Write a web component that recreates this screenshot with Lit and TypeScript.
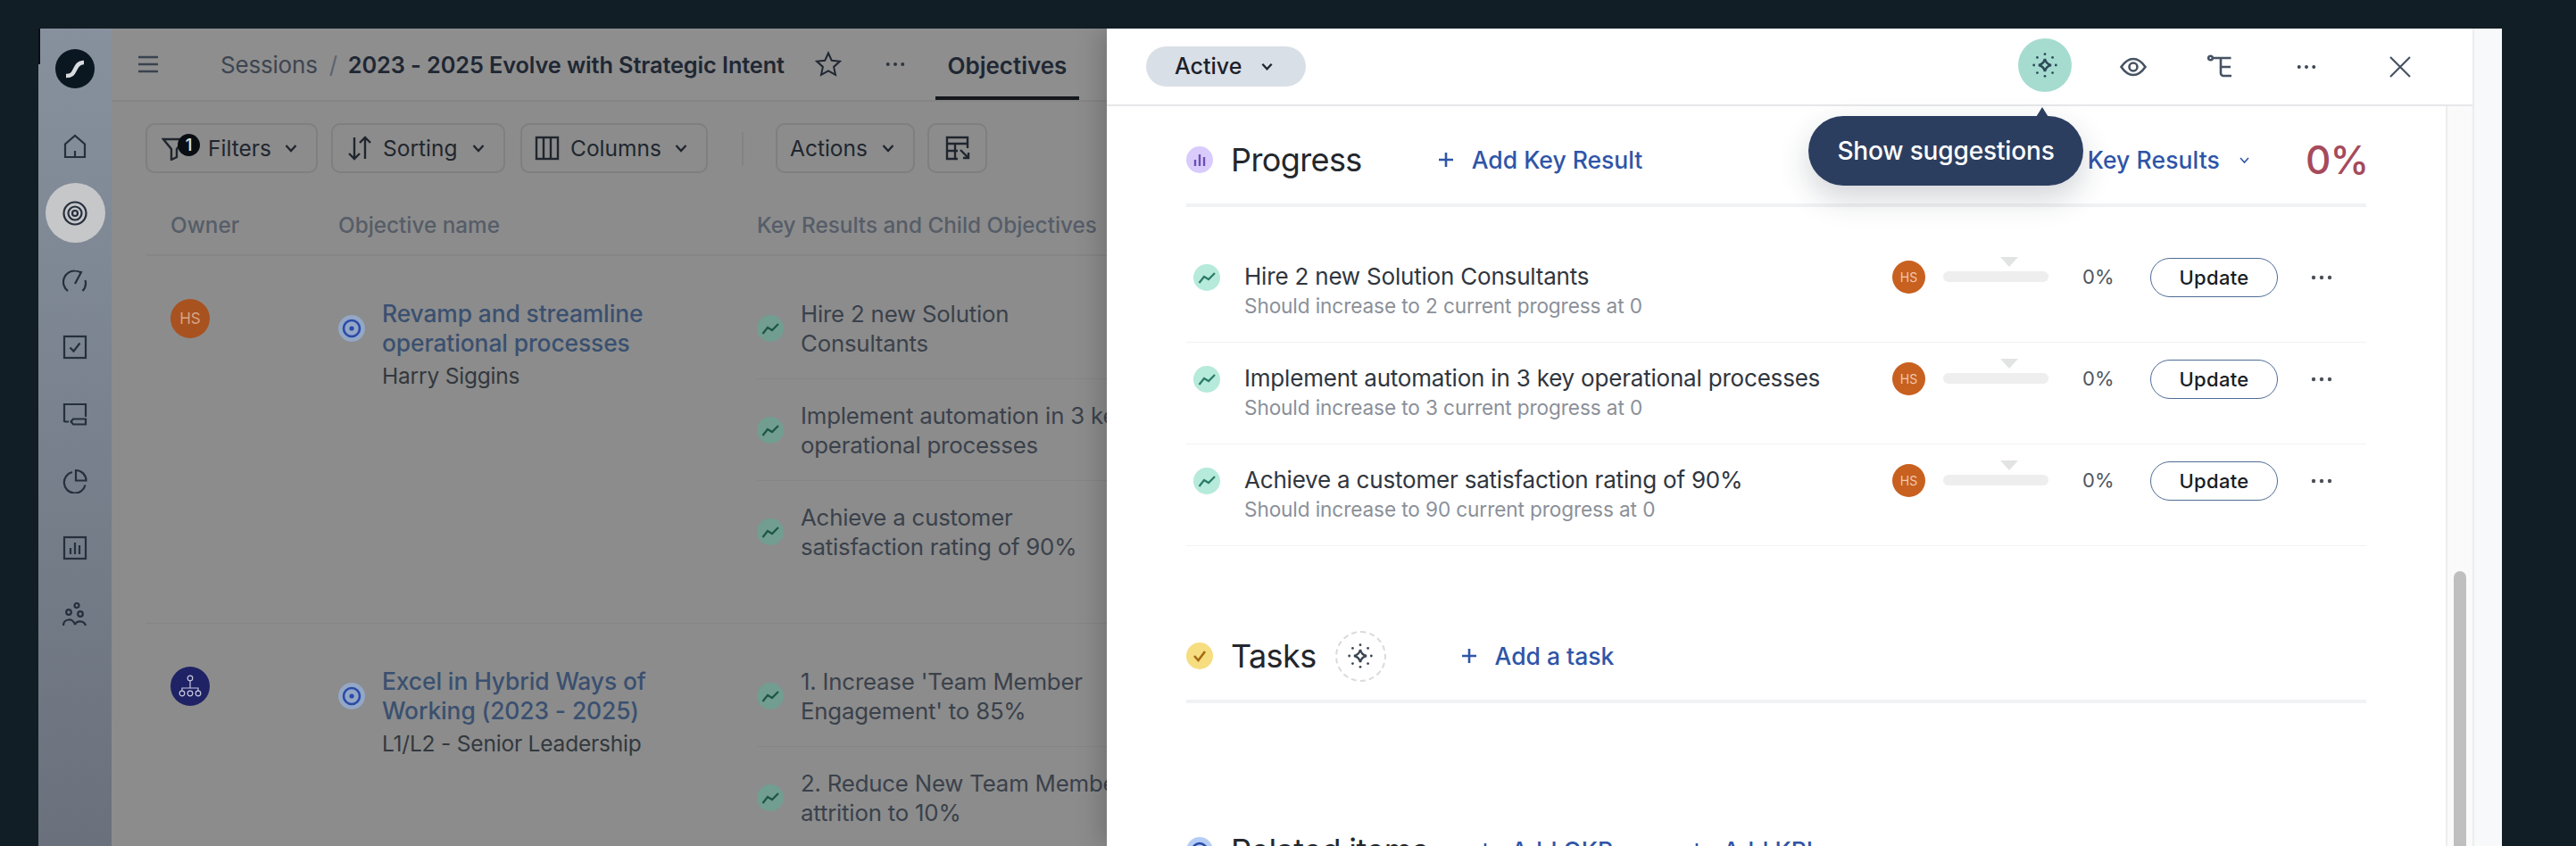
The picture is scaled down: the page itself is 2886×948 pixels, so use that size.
import { LitElement, html, svg, css } from "lit";
import { customElement } from "lit/decorators.js";

const rail = (d: any) => html`<svg class="rail-ic" viewBox="0 0 28 28">${d}</svg>`;
const chev = (cls = "chev") => html`<svg class=${cls} viewBox="0 0 16 16"><path d="M2.500 5 L8 11 L13.500 5"/></svg>`;
const dots = (cls = "dots") => html`<svg class=${cls} viewBox="0 0 24 6"><circle cx="3" cy="3" r="2.200"/><circle cx="12" cy="3" r="2.200"/><circle cx="21" cy="3" r="2.200"/></svg>`;
const spark = (cls: string) => html`<svg class=${cls} viewBox="0 0 28 28">
  <path class="fill" d="M14 7.500 Q15.200 12.800 20.500 14 Q15.200 15.200 14 20.500 Q12.800 15.200 7.500 14 Q12.800 12.800 14 7.500Z"/>
  <g class="ray"><circle cx="14" cy="2.500" r="1.300"/><circle cx="14" cy="25.500" r="1.300"/><circle cx="2.500" cy="14" r="1.300"/><circle cx="25.500" cy="14" r="1.300"/><circle cx="6" cy="6" r="1.300"/><circle cx="22" cy="6" r="1.300"/><circle cx="6" cy="22" r="1.300"/><circle cx="22" cy="22" r="1.300"/></g></svg>`;
const trend = (dim: boolean) => html`<span class="dotic ${dim ? "trend-dim" : "trend"}"><svg viewBox="0 0 30 30"><path d="M6.500 21 L12 14 L17 17 L24 10"/></svg></span>`;
const objIc = () => html`<span class="objic"><svg viewBox="0 0 30 30"><circle cx="15" cy="15" r="9"/><circle class="c" cx="15" cy="15" r="2.600"/></svg></span>`;
const plus = () => html`<svg class="plus" viewBox="0 0 18 18"><path d="M9 1v16M1 9h16"/></svg>`;

const OBJECTIVES = [
  { org: false, title: ["Revamp and streamline", "operational processes"], sub: "Harry Siggins",
    krs: [["Hire 2 new Solution", "Consultants"], ["Implement automation in 3 key", "operational processes"], ["Achieve a customer", "satisfaction rating of 90%"]] },
  { org: true, title: ["Excel in Hybrid Ways of", "Working (2023 - 2025)"], sub: "L1/L2 - Senior Leadership",
    krs: [["1. Increase 'Team Member", "Engagement' to 85%"], ["2. Reduce New Team Member", "attrition to 10%"]] },
];
const PROGRESS = [
  ["Hire 2 new Solution Consultants", "Should increase to 2 current progress at 0"],
  ["Implement automation in 3 key operational processes", "Should increase to 3 current progress at 0"],
  ["Achieve a customer satisfaction rating of 90%", "Should increase to 90 current progress at 0"],
];

@customElement("app-root")
export class AppRoot extends LitElement {
  static styles = css`
    :host { display: block; font-family: Inter, "Liberation Sans", sans-serif; }
    * { box-sizing: border-box; }
    svg { display: block; flex: none; }
    .shell { width: 2886px; height: 948px; background: #121e25; padding: 32px 0 0 43px; overflow: hidden; position: relative; }
    .nub { position: absolute; left: 43px; top: 32px; width: 2px; height: 40px; background: #0a0f13; z-index: 5; }
    .app { width: 2760px; height: 916px; display: flex; position: relative; overflow: hidden; }
    .rail { width: 82px; flex: none; display: flex; flex-direction: column; align-items: center; padding-top: 23px; background: linear-gradient(#87919e, #6a717c); }
    .logo { width: 44px; height: 44px; margin-bottom: 31px; }
    .rail-item { width: 67px; height: 67px; margin-bottom: 8px; display: flex; align-items: center; justify-content: center; border-radius: 50%; }
    .rail-item.on { background: #c6c7c9; }
    .rail-ic { width: 28px; height: 28px; fill: none; stroke: #262f3d; stroke-width: 2.200; }
    .main { flex: 1; background: #8c8c8c; min-width: 0; }
    .top { height: 82px; display: flex; align-items: center; border-bottom: 2px solid #858585; background: #8e8e8e; padding-left: 29px; position: relative; }
    .burger { width: 24px; height: 20px; fill: none; stroke: #3a4350; stroke-width: 2.600; }
    .crumb { margin-left: 69px; font-size: 26px; color: #3d4550; white-space: nowrap; letter-spacing: -0.200px; }
    .sep { margin: 0 12px 0 13px; color: #5c636d; font-size: 26px; }
    .ttl { font-size: 25.300px; font-weight: 600; color: #1f2733; white-space: nowrap; letter-spacing: -0.100px; }
    .star { width: 30px; height: 30px; margin-left: 34px; fill: none; stroke: #1f2733; stroke-width: 2; }
    .top .dots { width: 22px; height: 6px; fill: #2f3640; margin-left: 49px; }
    .tab { margin-left: 34px; height: 80px; padding: 6px 0 0; display: flex; align-items: center; font-size: 26px; font-weight: 600; color: #1f2733; border-bottom: 4px solid #14181d; white-space: nowrap; width: 161px; justify-content: center; }
    .tools { display: flex; padding: 24px 0 0 38px; height: 79px; }
    .btn { height: 56px; border: 2px solid #7f7f7f; border-radius: 10px; display: flex; align-items: center; font-size: 24.500px; color: #20262e; position: relative; white-space: nowrap; }
    .b-filter { width: 193px; padding-left: 16px; }
    .b-sort { width: 195px; padding-left: 16px; margin-left: 15px; }
    .b-cols { width: 210px; padding-left: 14px; margin-left: 17px; }
    .b-act { width: 156px; padding-left: 14px; }
    .b-grid { width: 67px; justify-content: center; margin-left: 14px; }
    .vr { width: 2px; height: 38px; background: #838383; margin: 10px 36px 0 38px; }
    .tic { width: 28px; height: 28px; fill: none; stroke: #20262e; stroke-width: 2.400; margin-right: 12px; }
    .b-grid .tic { margin: 0; }
    .btn .chev { margin-left: auto; margin-right: 20px; }
    .chev { width: 16px; height: 16px; fill: none; stroke: #20262e; stroke-width: 2.400; }
    .badge { position: absolute; left: 34px; top: 10px; width: 25px; height: 25px; border-radius: 50%; background: #0a0e12; color: #d8d8d8; font-size: 18px; font-weight: 600; display: flex; align-items: center; justify-content: center; }
    .b-filter .tic { margin-right: 24px; }
    .grid { display: grid; grid-template-columns: 188px 469px 1fr; padding-left: 27px; }
    .thead { margin-left: 39px; height: 94px; padding-top: 26px; align-items: center; border-bottom: 2px solid #858585; font-size: 24.300px; font-weight: 500; color: #565d68; white-space: nowrap; }
    .tr { margin-left: 39px; padding-top: 24px; padding-bottom: 45px; border-bottom: 1px solid #858585; }
    .ava { width: 44px; height: 44px; margin-top: 24px; border-radius: 50%; display: flex; align-items: center; justify-content: center; background: #a85220; color: #d7a584; font-size: 17px; }
    .ava.org { background: #1f2264; }
    .ava svg { width: 30px; height: 30px; fill: none; stroke: #c6c8de; stroke-width: 1.200; }
    .ocell { display: flex; gap: 19px; margin-top: 24px; }
    .objic { width: 30px; height: 30px; flex: none; margin-top: 18px; border-radius: 50%; background: #93a7c6; }
    .objic svg { fill: none; stroke: #2b49a8; stroke-width: 2.600; width: 30px; height: 30px; }
    .objic .c { fill: #2b49a8; stroke: none; }
    .otitle { font-size: 26.400px; line-height: 33px; font-weight: 500; color: #3a5070; white-space: nowrap; letter-spacing: -0.100px; }
    .osub { font-size: 24.500px; line-height: 33px; margin-top: 4px; color: #33383e; white-space: nowrap; letter-spacing: -0.200px; }
    .kr { height: 114px; display: flex; align-items: center; gap: 19px; border-bottom: 1px solid #858585; }
    .kr.last { border-bottom: 0; }
    .krt { font-size: 25.800px; line-height: 33px; color: #3a414b; white-space: nowrap; letter-spacing: -0.200px; }
    .dotic { width: 30px; height: 30px; flex: none; border-radius: 50%; display: block; }
    .dotic svg { width: 30px; height: 30px; fill: none; stroke-width: 2.200; }
    .trend { background: #b6eadb; } .trend svg { stroke: #2a7c67; }
    .trend-dim { background: #719e90; } .trend-dim svg { stroke: #1e5548; }
    .panel { position: absolute; left: 1197px; top: 0; width: 1563px; height: 916px; display: flex; background: #fff; box-shadow: -8px 0 26px rgba(0,0,0,.18); }
    .pcol { width: 1532px; display: flex; flex-direction: column; border-right: 2px solid #eceded; }
    .strip { flex: 1; background: #f8f9fa; }
    .phead { height: 87px; flex: none; display: flex; align-items: center; border-bottom: 2px solid #e6e7e9; padding-left: 44px; position: relative; }
    .pill { width: 179px; height: 45px; margin-top: -1px; border-radius: 23px; background: #d9dfe6; display: flex; align-items: center; padding-left: 32px; font-size: 25px; font-weight: 500; color: #1b212a; }
    .pill .chev { margin-left: 21px; width: 15px; height: 15px; }
    .sug { margin-left: auto; width: 60px; height: 60px; border-radius: 50%; background: #a6dccf; display: flex; align-items: center; justify-content: center; margin-top: -4px; }
    .sug-ic { width: 30px; height: 30px; }
    .sug-ic .fill { fill: #a6dccf; stroke: #2e4b58; stroke-width: 2.400; }
    .ds-ic .fill { fill: #fff; stroke: #3a4652; stroke-width: 2.200; }
    .sug-ic .ray { fill: #2e4b58; }
    .ds-ic .ray { fill: #3a4652; }
    .pic { width: 30px; height: 30px; fill: none; stroke: #465263; stroke-width: 2.600; }
    .pic.eye { margin-left: 54px; }
    .pic.tree { margin-left: 68px; }
    .phead .dots { width: 22px; height: 6px; fill: #3b4757; margin-left: 70px; }
    .pic.x { margin-left: 81px; margin-right: 68px; width: 26px; height: 26px; stroke-width: 2.200; }
    .tip { position: absolute; left: 786px; top: 98px; width: 308px; height: 78px; border-radius: 39px; background: #2c3e60; color: #fff; display: flex; align-items: center; justify-content: center; font-size: 28px; font-weight: 500; letter-spacing: -0.150px; box-shadow: 0 14px 34px rgba(30,40,60,.2); z-index: 3; }
    .tip::before { content: ""; position: absolute; left: 252px; top: -10px; width: 0; height: 0; border-left: 10px solid transparent; border-right: 10px solid transparent; border-bottom: 16px solid #2c3e60; }
    .pbody { flex: 1; display: flex; min-height: 0; }
    .content { width: 1500px; padding: 11px 89px 0; overflow: hidden; }
    .track { flex: 1; background: #fafafa; border-left: 2px solid #eceded; padding: 521px 7px 0 7px; display: flex; }
    .thumb { flex: 1; background: #bfbfbf; border-radius: 8px 8px 0 0; }
    .sh { height: 102px; border-bottom: 4px solid #f1f2f3; display: flex; align-items: center; }
    .sh.tasks { margin-top: 74px; }
    .sh.rel { margin-top: 114px; border: 0; }
    .sic { width: 30px; height: 30px; border-radius: 50%; flex: none; margin-right: 20px; }
    .sic svg { width: 30px; height: 30px; fill: none; }
    .sic.p { background: #d9cbfb; } .sic.p svg { stroke: #6c50b8; stroke-width: 2.400; }
    .sic.t { background: #f6dd80; } .sic.t svg { stroke: #a56a12; stroke-width: 2.600; }
    .sic.r { background: #b4cdf6; } .sic.r svg { stroke: #2b49a8; stroke-width: 2.600; }
    .stitle { font-size: 36px; color: #23272d; white-space: nowrap; letter-spacing: -0.600px; }
    .add { display: flex; align-items: center; color: #2f55a8; font-size: 26.500px; font-weight: 500; white-space: nowrap; }
    .plus { width: 18px; height: 18px; fill: none; stroke: #2f55a8; stroke-width: 2.600; margin-right: 20px; }
    .m-p { margin-left: 85px; } .m-t { margin-left: 84px; } .m-r { margin-left: 55px; } .m-k { margin-left: 85px; }
    .ds { width: 57px; height: 57px; margin-left: 21px; border-radius: 50%; border: 2px dashed #dadada; display: flex; align-items: center; justify-content: center; }
    .ds-ic { width: 30px; height: 30px; }
    .kfilter { margin-left: auto; display: flex; align-items: center; color: #2f55a8; font-size: 26.500px; font-weight: 500; letter-spacing: .1px; }
    .kfilter .chev { stroke: #2f55a8; width: 13px; height: 13px; margin: 0 62px 0 21px; stroke-width: 2; }
    .zero { font-size: 44px; font-weight: 500; color: #a64a5c; width: 68px; white-space: nowrap; letter-spacing: -1px; }
    .rows { margin-top: 38px; }
    .row { height: 114px; display: flex; align-items: center; border-bottom: 1px solid #f1f2f3; padding-left: 8px; }
    .row > .dotic { margin-bottom: 32px; margin-right: 27px; }
    .rtxt { flex: 1; min-width: 0; }
    .rt { font-size: 26px; line-height: 32px; color: #30363e; white-space: nowrap; letter-spacing: -0.200px; }
    .rs { font-size: 22.600px; line-height: 32px; margin-top: 1px; color: #8b9099; white-space: nowrap; letter-spacing: -0.100px; }
    .rright { display: flex; align-items: center; margin-bottom: 32px; width: 531px; flex: none; }
    .rava { width: 37px; height: 37px; border-radius: 50%; background: #c8601f; color: #f0c9ad; font-size: 14px; display: flex; align-items: center; justify-content: center; margin-right: 20px; }
    .bar { width: 118px; height: 12px; border-radius: 6px; background: #eeeeee; position: relative; margin-top: -2px; }
    .bar::before { content: ""; position: absolute; left: 64px; top: -16px; border-left: 10px solid transparent; border-right: 10px solid transparent; border-top: 11px solid #e2e3e3; }
    .pct { margin-left: 38px; width: 76px; font-size: 22px; color: #4f5660; margin-top: -2px; }
    .upd { width: 143px; height: 44px; border: 1.500px solid #4f6c96; border-radius: 22px; display: flex; align-items: center; justify-content: center; font-size: 22px; font-weight: 500; color: #181d24; letter-spacing: .3px; }
    .row .dots { width: 24px; height: 6px; fill: #4b5059; margin-left: 37px; }
  `;

  render() {
    return html`<div class="shell"><div class="nub"></div><div class="app">
      ${this.renderRail()}
      ${this.renderMain()}
      ${this.renderPanel()}
    </div></div>`;
  }

  renderRail() {
    const items = [
      svg`<path d="M3 26V11.500L14 2l11 9.500V26H3ZM14 26v-7"/>`,
      svg`<circle cx="14" cy="14" r="12.500"/><circle cx="14" cy="14" r="7.500"/><circle cx="14" cy="14" r="3"/>`,
      svg`<path d="M6 26A12.500 12.500 0 0 1 14 3.500a12 12 0 0 1 6 1.600M22.500 26a12.500 12.500 0 0 0 3-12M14 18 21.500 4"/>`,
      svg`<rect x="2" y="2" width="24" height="24"/><path d="M8.500 14.500l4 4 7-9"/>`,
      svg`<path d="M2 23V3h24v14M2 22.500h5"/><path d="M9.500 22.500L12 19.500H26V25.500H12Z"/>`,
      svg`<path d="M11 4A12 12 0 1 0 25.500 18.500"/><path d="M15 2a11.500 11.500 0 0 1 11.500 11.500H15Z"/>`,
      svg`<rect x="2" y="2" width="24" height="24"/><path d="M9 21v-7M14 21V8M19 21v-10"/>`,
      svg`<circle cx="16" cy="3.500" r="2.500"/><circle cx="7" cy="11" r="2.800"/><circle cx="20" cy="13" r="2.800"/><path d="M1 26c0-8 11-9 13-1M14 25c2-5 10-5 12 1"/>`,
    ];
    return html`<nav class="rail">
      <svg class="logo" viewBox="0 0 44 44"><circle cx="22" cy="22" r="22" fill="#0a1620"/><path d="M12 30c7 0 8-3 10-7s4-8 10-8" fill="none" stroke="#d9dcdf" stroke-width="4.600"/></svg>
      ${items.map((d, i) => html`<div class="rail-item ${i === 1 ? "on" : ""}">${rail(d)}</div>`)}
    </nav>`;
  }

  renderMain() {
    return html`<div class="main">
      <div class="top">
        <svg class="burger" viewBox="0 0 24 20"><path d="M1 2h22M1 10h22M1 18h22"/></svg>
        <span class="crumb">Sessions<span class="sep">/</span></span>
        <span class="ttl">2023 - 2025 Evolve with Strategic Intent</span>
        <svg class="star" viewBox="0 0 30 30"><path d="M15 2.500l3.800 8.300 9 1-6.700 6.100 1.900 8.900L15 22.300l-8 4.500 1.900-8.900-6.700-6.100 9-1Z"/></svg>
        ${dots()}
        <div class="tab">Objectives</div>
      </div>
      <div class="tools">
        <div class="btn b-filter"><svg class="tic" viewBox="0 0 28 28"><path d="M2 4h24L17 15v9l-6 3V15Z"/></svg><span class="badge">1</span>Filters${chev()}</div>
        <div class="btn b-sort"><svg class="tic" viewBox="0 0 28 28"><path d="M8 2v24M2 20l6 6 6-6M20 26V2M14 8l6-6 6 6"/></svg>Sorting${chev()}</div>
        <div class="btn b-cols"><svg class="tic" viewBox="0 0 28 28"><rect x="2" y="2" width="24" height="24"/><path d="M10 2v24M18 2v24"/></svg>Columns${chev()}</div>
        <div class="vr"></div>
        <div class="btn b-act">Actions${chev()}</div>
        <div class="btn b-grid"><svg class="tic" viewBox="0 0 28 28"><path d="M25 14V2H2v24h12M2 9h23M2 17h12M11 9v17M17 16l9 9M26 19v6h-6"/></svg></div>
      </div>
      <div class="grid thead"><div>Owner</div><div>Objective name</div><div>Key Results and Child Objectives</div></div>
      ${OBJECTIVES.map((o) => html`<div class="grid tr">
        <div><div class="ava ${o.org ? "org" : ""}">${o.org
          ? html`<svg viewBox="0 0 30 30"><circle cx="15" cy="6" r="2.800"/><circle cx="6" cy="23" r="2.800"/><circle cx="15" cy="23" r="2.800"/><circle cx="24" cy="23" r="2.800"/><path d="M15 9v8M6 20v-3h18v3"/></svg>`
          : "HS"}</div></div>
        <div class="ocell">${objIc()}<div>
          <div class="otitle">${o.title[0]}<br>${o.title[1]}</div>
          <div class="osub">${o.sub}</div></div></div>
        <div>${o.krs.map((k, i) => html`<div class="kr ${i === o.krs.length - 1 ? "last" : ""}">${trend(true)}<div class="krt">${k[0]}<br>${k[1]}</div></div>`)}</div>
      </div>`)}
    </div>`;
  }

  renderPanel() {
    return html`<aside class="panel">
      <div class="pcol">
        <div class="phead">
          <div class="pill">Active${chev()}</div>
          <div class="sug">${spark("sug-ic")}</div>
          <svg class="pic eye" viewBox="0 0 30 30"><path d="M1.500 15C6 8.500 10 6 15 6s9 2.500 13.500 9C24 21.500 20 24 15 24s-9-2.500-13.500-9Z"/><circle cx="15" cy="15" r="4.500"/></svg>
          <svg class="pic tree" viewBox="0 0 30 30"><circle cx="3.500" cy="5" r="2.300"/><path d="M6.500 5h20M15 5v17a3 3 0 0 0 3 3h9M15 15h11"/></svg>
          ${dots()}
          <svg class="pic x" viewBox="0 0 26 26"><path d="M2 2l22 22M24 2 2 24"/></svg>
          <div class="tip">Show suggestions</div>
        </div>
        <div class="pbody">
          <div class="content">
            <div class="sh">
              <span class="sic p"><svg viewBox="0 0 30 30"><path d="M10 15v7M15 9v13M20 12v10"/></svg></span>
              <span class="stitle">Progress</span>
              <span class="add m-p">${plus()}Add Key Result</span>
              <span class="kfilter">Key Results${chev()}<span class="zero">0%</span></span>
            </div>
            <div class="rows">
              ${PROGRESS.map((r) => html`<div class="row">
                ${trend(false)}
                <div class="rtxt"><div class="rt">${r[0]}</div><div class="rs">${r[1]}</div></div>
                <div class="rright">
                  <div class="rava">HS</div><div class="bar"></div><div class="pct">0%</div>
                  <div class="upd">Update</div>${dots()}
                </div>
              </div>`)}
            </div>
            <div class="sh tasks">
              <span class="sic t"><svg viewBox="0 0 30 30"><path d="M9 15l4.500 5L21 10"/></svg></span>
              <span class="stitle">Tasks</span>
              <span class="ds">${spark("ds-ic")}</span>
              <span class="add m-t">${plus()}Add a task</span>
            </div>
            <div class="sh rel">
              <span class="sic r"><svg viewBox="0 0 30 30"><circle cx="15" cy="15" r="8"/></svg></span>
              <span class="stitle">Related items</span>
              <span class="add m-r">${plus()}Add OKR</span>
              <span class="add m-k">${plus()}Add KPI</span>
            </div>
          </div>
          <div class="track"><div class="thumb"></div></div>
        </div>
      </div>
      <div class="strip"></div>
    </aside>`;
  }
}
